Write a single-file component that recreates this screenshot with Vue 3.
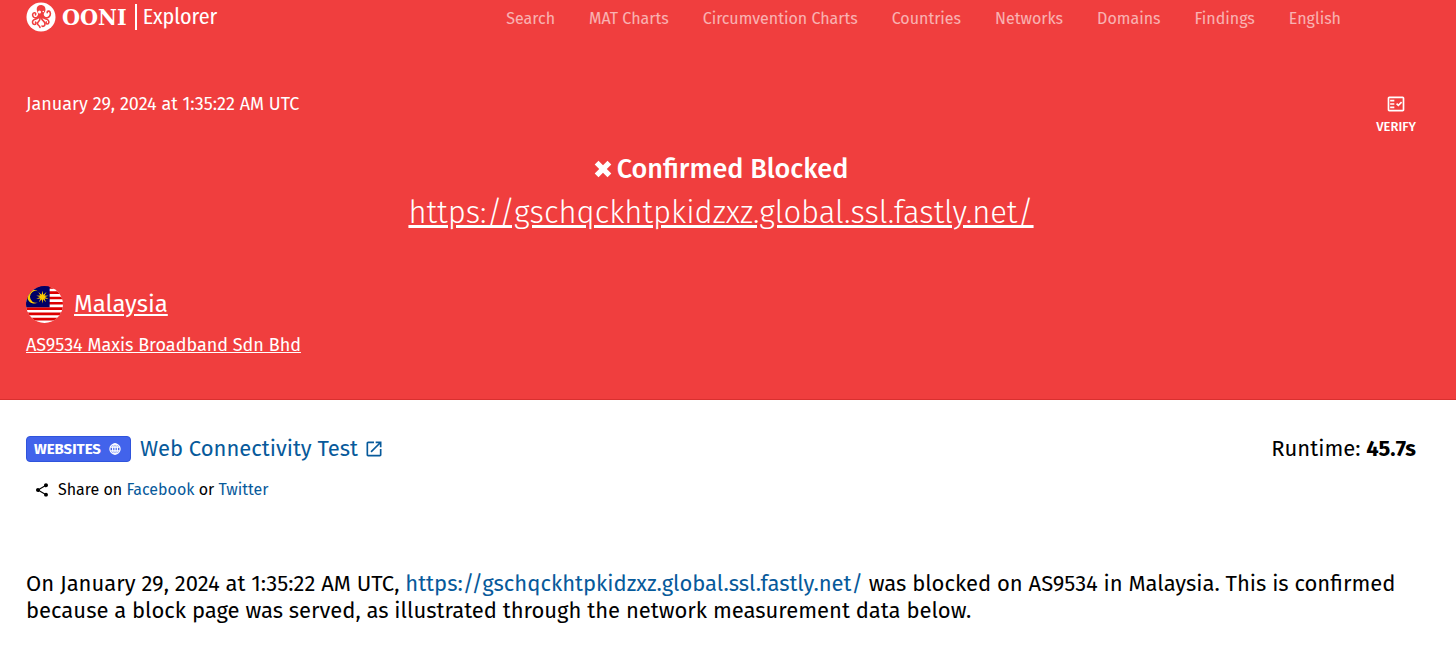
<script setup>
const navLinks = [
	'Search',
	'MAT Charts',
	'Circumvention Charts',
	'Countries',
	'Networks',
	'Domains',
	'Findings',
	'English'
];

const measurement = {
	date: 'January 29, 2024 at 1:35:22 AM UTC',
	url: 'https://gschqckhtpkidzxz.global.ssl.fastly.net/',
	country: 'Malaysia',
	asn: 'AS9534',
	network: 'Maxis Broadband Sdn Bhd',
	runtime: '45.7s'
};
</script>

<template>
	<div class="page">
		<header class="hero">
			<nav class="navbar">
				<a class="logo" href="#">
					<svg class="logo-mark" viewBox="0 0 30 30" aria-hidden="true">
						<circle cx="15" cy="15" r="14.5" fill="#fff" />
						<g fill="none" stroke="#f03e3e" stroke-width="1.6" stroke-linecap="round">
							<path d="M12.500 13.500c-.5 2.500-3.500 3-5 1.500s-1-4 .8-4.200c1.300-.1 1.700 1.200 1.200 2" />
							<path d="M17 13c.5 2.500 3 3.500 5 2.500s3-3.500 2-5.500c-.8-1.500-3-1-2.800.6" />
							<path d="M12.500 15c-1 2.500-3.500 2-5 3.200-1.800 1.500-1 4.300 1 4.300 1.500 0 2-1.500 1-2.300" />
							<path d="M14 16c.5 3-2.500 3.500-2.500 5.500s2.500 2 2.500 4" />
							<path d="M15.500 16c.5 3 3.500 3 3.500 6 0 2-2 3-3 2" />
							<path d="M17 15c1 2.500 3.500 1.500 5 3s1 4-.7 4c-1.300 0-1.600-1.200-1-2" />
						</g>
						<path d="M15.500 3c-3.200-.2-5 2-4.800 4.500.1 2 1.300 3 1.300 4.500v4.500h5.500V13c0-2 1.900-2.700 2-5.300.1-2.700-1.700-4.600-4-4.700z" fill="#f03e3e" />
						<circle cx="13.500" cy="10" r="1.500" fill="#fff" />
						<circle cx="17.300" cy="9.500" r=".8" fill="#fff" />
					</svg>
					<span class="logo-name">OONI</span>
					<span class="logo-product">Explorer</span>
				</a>
				<ul class="nav-links">
					<li v-for="link in navLinks" :key="link"><a href="#">{{ link }}</a></li>
				</ul>
			</nav>

			<div class="hero-top">
				<time>{{ measurement.date }}</time>
				<button class="verify" type="button">
					<svg viewBox="0 0 24 24" aria-hidden="true">
						<path d="M20 3H4c-1.100 0-2 .9-2 2v14c0 1.100.9 2 2 2h16c1.100 0 2-.9 2-2V5c0-1.100-.9-2-2-2zm0 16H4V5h16v14z" />
						<path d="M19.410 10.420L17.990 9l-3.170 3.170-1.410-1.420L12 12.160 14.820 15zM5 7h5v2H5zM5 11h5v2H5zM5 15h5v2H5z" />
					</svg>
					VERIFY
				</button>
			</div>

			<div class="result">
				<h1>
					<svg viewBox="0 0 18 18" aria-hidden="true">
						<path d="M4.500.7L9 5.200 13.500.7l3.800 3.800L12.800 9l4.500 4.500-3.800 3.800L9 12.800l-4.500 4.500-3.800-3.800L5.200 9 .7 4.500z" />
					</svg>
					Confirmed Blocked
				</h1>
				<a class="result-url" href="#">{{ measurement.url }}</a>
			</div>

			<div class="country">
				<svg class="flag" viewBox="0 0 36 36" aria-hidden="true">
					<defs>
						<clipPath id="flag-clip"><circle cx="18" cy="18" r="18" /></clipPath>
					</defs>
					<g clip-path="url(#flag-clip)">
						<path d="M0 0h36v36H0z" fill="#fff" />
						<path d="M0 0h36v2.600H0zM0 5.200h36v2.600H0zM0 10.400h36v2.600H0zM0 15.500h36v2.600H0zM0 20.700h36v2.600H0zM0 25.800h36v2.600H0zM0 31h36v2.600H0z" fill="#d00" />
						<path d="M0 0h23v20.700H0z" fill="#006" />
						<path d="M11.500 5a6.600 6.600 0 1 0 0 11 5.800 5.800 0 1 1 0-11z" fill="#fc0" />
						<path d="M16 4.500l.8 4 3.200-2.700-2 3.500 4 .2-3.600 1.200 3.600 2-4-.5 1.500 3.600-2.800-2.800-.7 4-.7-4-2.800 2.800 1.500-3.600-4 .5 3.600-2L10 9.500l4-.2-2-3.500 3.200 2.700z" fill="#fc0" />
					</g>
				</svg>
				<a href="#">{{ measurement.country }}</a>
			</div>
			<a class="network" href="#">{{ measurement.asn }} {{ measurement.network }}</a>
		</header>

		<main class="details">
			<div class="test-row">
				<div class="test-name">
					<span class="badge">
						WEBSITES
						<svg viewBox="0 0 20 20" aria-hidden="true">
							<circle cx="10" cy="10" r="8.500" />
							<ellipse cx="10" cy="10" rx="4" ry="8.500" />
							<path d="M10 1.500v17M2.500 7h15M2.500 13h15" />
						</svg>
					</span>
					<a href="#">
						Web Connectivity Test
						<svg viewBox="0 0 24 24" aria-hidden="true">
							<path d="M19 19H5V5h7V3H5c-1.110 0-2 .9-2 2v14c0 1.100.89 2 2 2h14c1.100 0 2-.9 2-2v-7h-2v7zM14 3v2h3.590l-9.830 9.830 1.410 1.410L19 6.410V10h2V3h-7z" />
						</svg>
					</a>
				</div>
				<div>Runtime: <strong>{{ measurement.runtime }}</strong></div>
			</div>

			<div class="share">
				<svg viewBox="0 0 24 24" aria-hidden="true">
					<path d="M18 16.080c-.76 0-1.440.3-1.960.77L8.910 12.700c.05-.23.09-.46.09-.7s-.04-.47-.09-.7l7.050-4.110c.54.5 1.250.81 2.040.81 1.660 0 3-1.340 3-3s-1.340-3-3-3-3 1.340-3 3c0 .24.04.47.09.7L8.040 9.810C7.500 9.310 6.790 9 6 9c-1.660 0-3 1.340-3 3s1.340 3 3 3c.79 0 1.500-.31 2.040-.81l7.120 4.160c-.05.21-.08.43-.08.65 0 1.610 1.310 2.920 2.920 2.920s2.920-1.310 2.920-2.920-1.310-2.920-2.920-2.920z" />
				</svg>
				<span>Share on <a href="#">Facebook</a> or <a href="#">Twitter</a></span>
			</div>

			<p class="summary">
				On {{ measurement.date }}, <a href="#">{{ measurement.url }}</a> was blocked on {{ measurement.asn }} in {{ measurement.country }}. This is confirmed because a block page was served, as illustrated through the network measurement data below.
			</p>
		</main>
	</div>
</template>

<style>
body {
	margin: 0;
	background-color: #fff;
}
</style>

<style scoped>
.page {
	font-family: "Fira Sans", "Noto Sans", sans-serif;
	font-size: 16px;
	color: #000;
}

a {
	color: #075a9b;
	text-decoration: none;
}

svg {
	flex: none;
	fill: currentColor;
}

.hero {
	padding: 0 40px 43px 26px;
	border-bottom: 1px solid #d9302f;
	background-color: #f03e3e;
	color: #fff;
}

.hero a {
	color: #fff;
}

.navbar {
	display: flex;
	justify-content: space-between;
	height: 36px;
	padding-right: 75px;
}

.logo {
	display: flex;
	align-items: center;
	height: 33px;
}

.logo-mark {
	width: 30px;
	height: 30px;
}

.logo-name {
	margin: 0 8px 0 6px;
	font-family: "DejaVu Serif Condensed", "DejaVu Serif", serif;
	font-size: 23px;
	font-weight: bold;
}

.logo-product {
	padding-left: 6px;
	border-left: 2px solid #fff;
	font-family: "Fira Sans Condensed", "Fira Sans", "Noto Sans", sans-serif;
	font-size: 22px;
	line-height: 26px;
}

.nav-links {
	display: flex;
	align-items: center;
	gap: 34px;
	margin: 0;
	padding: 0;
	list-style: none;
}

.nav-links a {
	opacity: 0.6;
}

.hero-top {
	display: flex;
	justify-content: space-between;
	align-items: flex-start;
	margin-top: 58px;
	font-size: 18px;
	line-height: 20px;
}

.verify {
	display: flex;
	flex-direction: column;
	align-items: center;
	gap: 5px;
	padding: 0;
	border: 0;
	background: none;
	color: #fff;
	font-family: inherit;
	font-size: 13px;
	font-weight: 500;
	line-height: 16px;
}

.verify svg {
	width: 20px;
	height: 20px;
}

.result {
	display: flex;
	flex-direction: column;
	align-items: center;
	margin-top: 16px;
}

h1 {
	display: flex;
	align-items: center;
	gap: 5px;
	margin: 0;
	font-size: 27px;
	font-weight: 500;
	line-height: 36px;
}

h1 svg {
	width: 18px;
	height: 18px;
}

.result-url {
	font-size: 31px;
	font-weight: 300;
	line-height: 52px;
}

.hero .result-url,
.country a,
.hero .network {
	text-decoration: underline;
}

.country {
	display: flex;
	align-items: center;
	gap: 11px;
	margin-top: 45px;
	font-size: 24px;
	line-height: 40px;
}

.flag {
	width: 37px;
	height: 37px;
}

.network {
	display: block;
	width: fit-content;
	margin-top: 10px;
	font-size: 18px;
	line-height: 22px;
}

.details {
	padding: 32px 40px 0 26px;
	font-size: 22px;
}

.test-row {
	display: flex;
	justify-content: space-between;
	align-items: center;
	line-height: 34px;
}

.test-name {
	display: flex;
	align-items: center;
	gap: 9px;
}

.test-name a {
	display: flex;
	align-items: center;
	gap: 6px;
}

.test-name a svg {
	width: 20px;
	height: 20px;
}

.badge {
	display: flex;
	align-items: center;
	gap: 8px;
	padding: 0 9px 0 7px;
	border: 1px solid #2f54dc;
	border-radius: 4px;
	background-color: #4263eb;
	color: #fff;
	font-size: 15px;
	font-weight: bold;
	line-height: 24px;
}

.badge svg {
	width: 12px;
	height: 12px;
	fill: none;
	stroke: #fff;
	stroke-width: 2;
}

.share {
	display: flex;
	align-items: center;
	gap: 8px;
	margin: 14px 0 0 8px;
	font-size: 16px;
	line-height: 20px;
}

.share svg {
	width: 16px;
	height: 16px;
}

.summary {
	margin: 70px 0 0;
	line-height: 27px;
}
</style>
